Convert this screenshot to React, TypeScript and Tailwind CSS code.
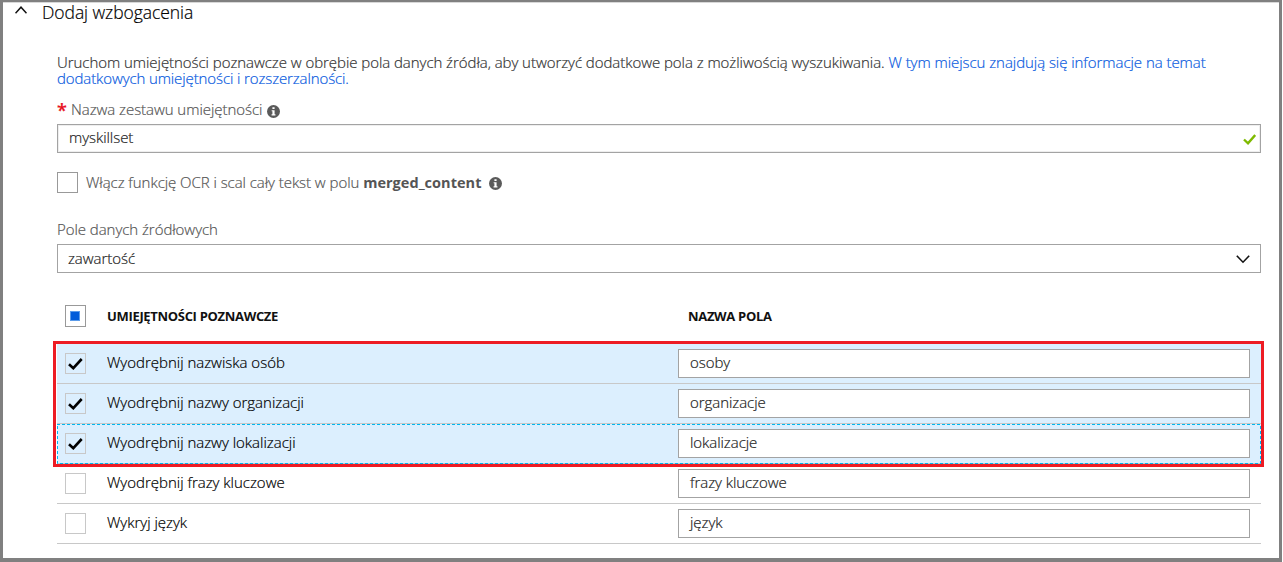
import React from "react";

type Skill = { name: string; field: string; checked: boolean; focused?: boolean };

const skills: Skill[] = [
  { name: "Wyodrębnij nazwiska osób", field: "osoby", checked: true },
  { name: "Wyodrębnij nazwy organizacji", field: "organizacje", checked: true },
  { name: "Wyodrębnij nazwy lokalizacji", field: "lokalizacje", checked: true, focused: true },
  { name: "Wyodrębnij frazy kluczowe", field: "frazy kluczowe", checked: false },
  { name: "Wykryj język", field: "język", checked: false },
];

function Info() {
  return (
    <svg className="size-[13px] shrink-0" viewBox="0 0 12 12">
      <circle cx="6" cy="6" r="6" fill="#5a5a5a" />
      <path d="M5 2h2v1.800H5zM4.300 4.800H7V8.600h.8v1H4.200v-1H5V5.800h-.7z" fill="#fff" />
    </svg>
  );
}

function SkillRow({ skill }: { skill: Skill }) {
  return (
    <div
      className={`relative flex h-10 items-start border-b border-[#c8c8c8] pl-2 pt-[5px] ${skill.checked ? "bg-[#dceffe]" : "bg-white"}`}
    >
      <div className="mt-1 flex size-[21px] shrink-0 items-center justify-center border border-[#c8c8c8]">
        {skill.checked && (
          <svg className="h-3 w-[15px]" viewBox="0 0 15 12" fill="none" stroke="#000" strokeWidth="2.600">
            <path d="M1 6.200 5.300 10.200 13.700 1" />
          </svg>
        )}
      </div>
      <span className="ml-[21px] w-[571px] shrink-0 leading-[26px] tracking-[-0.01px] text-black">{skill.name}</span>
      <div className="h-[29px] w-[572px] border border-[#a3a3a3] bg-white pl-[11px] leading-6 text-[#222]">
        {skill.field}
      </div>
      {skill.focused && (
        <svg className="absolute top-0 left-0 h-10 w-[1204px]" viewBox="0 0 1204 40" fill="none">
          <path d="M0 .5H1203.500V39.500H.5V0" stroke="#00b7f0" strokeDasharray="3 2" />
        </svg>
      )}
    </div>
  );
}

export default function App() {
  return (
    <div className="h-[562px] w-[1283px] bg-white font-['Open_Sans','Noto_Sans',sans-serif] text-[15px] font-light tracking-[-0.05px] text-[#555] [-webkit-text-stroke:0.2px]">
      <div className="h-[562px] w-[1282px] border-x-[3px] border-t-2 border-b-4 border-[#808080]">
        <header className="flex h-[51px] items-start border-t border-[#d8d8d8] pl-3">
          <svg className="mt-[3px] h-2 w-3" viewBox="0 0 12 8" fill="none" stroke="#111" strokeWidth="1.500">
            <path d="m.5 7.200 5.500-6 5.500 6" />
          </svg>
          <h1 className="ml-[15px] text-[17.5px] leading-[18px] text-black">Dodaj wzbogacenia</h1>
        </header>
        <main className="ml-[54px] w-[1204px]">
          <p className="h-[47px] pt-px leading-4 whitespace-nowrap text-[#333]">
            Uruchom umiejętności poznawcze w obrębie pola danych źródła, aby utworzyć dodatkowe pola z możliwością wyszukiwania.{" "}
            <a className="text-[#0a5be0]">
              W tym miejscu znajdują się informacje na temat
              <br />
              <span className="tracking-[-0.11px]">dodatkowych umiejętności i rozszerzalności.</span>
            </a>
          </p>
          <div className="flex h-6 items-start leading-[18px]">
            <span className="-mt-1 w-[14px] text-lg font-semibold text-[#e81123]">*</span>
            <label>Nazwa zestawu umiejętności</label>
            <div className="mt-[5px] ml-[5px]"><Info /></div>
          </div>
          <div className="flex h-[29px] items-start justify-between border border-[#a3a3a3] pr-1 pl-[11px] leading-6 text-[#222] shadow-[inset_0_0_0_1px_#eee]">
            <span>myskillset</span>
            <svg className="mt-[9px] h-[11px] w-[13px]" viewBox="0 0 13 11" fill="none" stroke="#7fba00" strokeWidth="2.400">
              <path d="m1 5.500 4 3.800L12.200 1" />
            </svg>
          </div>
          <div className="mt-[19px] flex h-[47px] items-start">
            <div className="size-[21px] border border-[#999]" />
            <span className="ml-2 leading-[21px]">
              Włącz funkcję OCR i scal cały tekst w polu <b className="text-[14.5px] font-bold tracking-[0.03px] text-[#555] [-webkit-text-stroke:0]">merged_content</b>
            </span>
            <div className="mt-[5px] ml-2"><Info /></div>
          </div>
          <div className="h-[25px] leading-5">Pole danych źródłowych</div>
          <div className="flex h-[29px] items-start justify-between border border-[#a3a3a3] pr-[10px] pl-[10px] leading-[27px] text-[#222]">
            <span>zawartość</span>
            <svg className="mt-[10px] h-[9px] w-[14px]" viewBox="0 0 14 9" fill="none" stroke="#111" strokeWidth="1.600">
              <path d="m.8.8 6.200 6.400L13.200.8" />
            </svg>
          </div>
          <div className="mt-8 flex h-9 items-start pl-2 text-[13px] leading-[22px] font-bold tracking-[-0.32px] text-[#111] [-webkit-text-stroke:0]">
            <div className="flex h-[22px] w-[21px] items-center border border-[#999] pl-1">
              <div className="size-[10px] border border-[#5b9bea] bg-[#015cda]" />
            </div>
            <span className="ml-[21px] w-[581px]">UMIEJĘTNOŚCI POZNAWCZE</span>
            <span>NAZWA POLA</span>
          </div>
          <div className="relative z-10 -mr-[3px] -ml-1 border-[3px] border-[#ed1c24] pl-px">
            {skills.slice(0, 3).map((s) => <SkillRow key={s.name} skill={s} />)}
          </div>
          <div className="-mt-[3px]">
            {skills.slice(3).map((s) => <SkillRow key={s.name} skill={s} />)}
          </div>
        </main>
      </div>
    </div>
  );
}
